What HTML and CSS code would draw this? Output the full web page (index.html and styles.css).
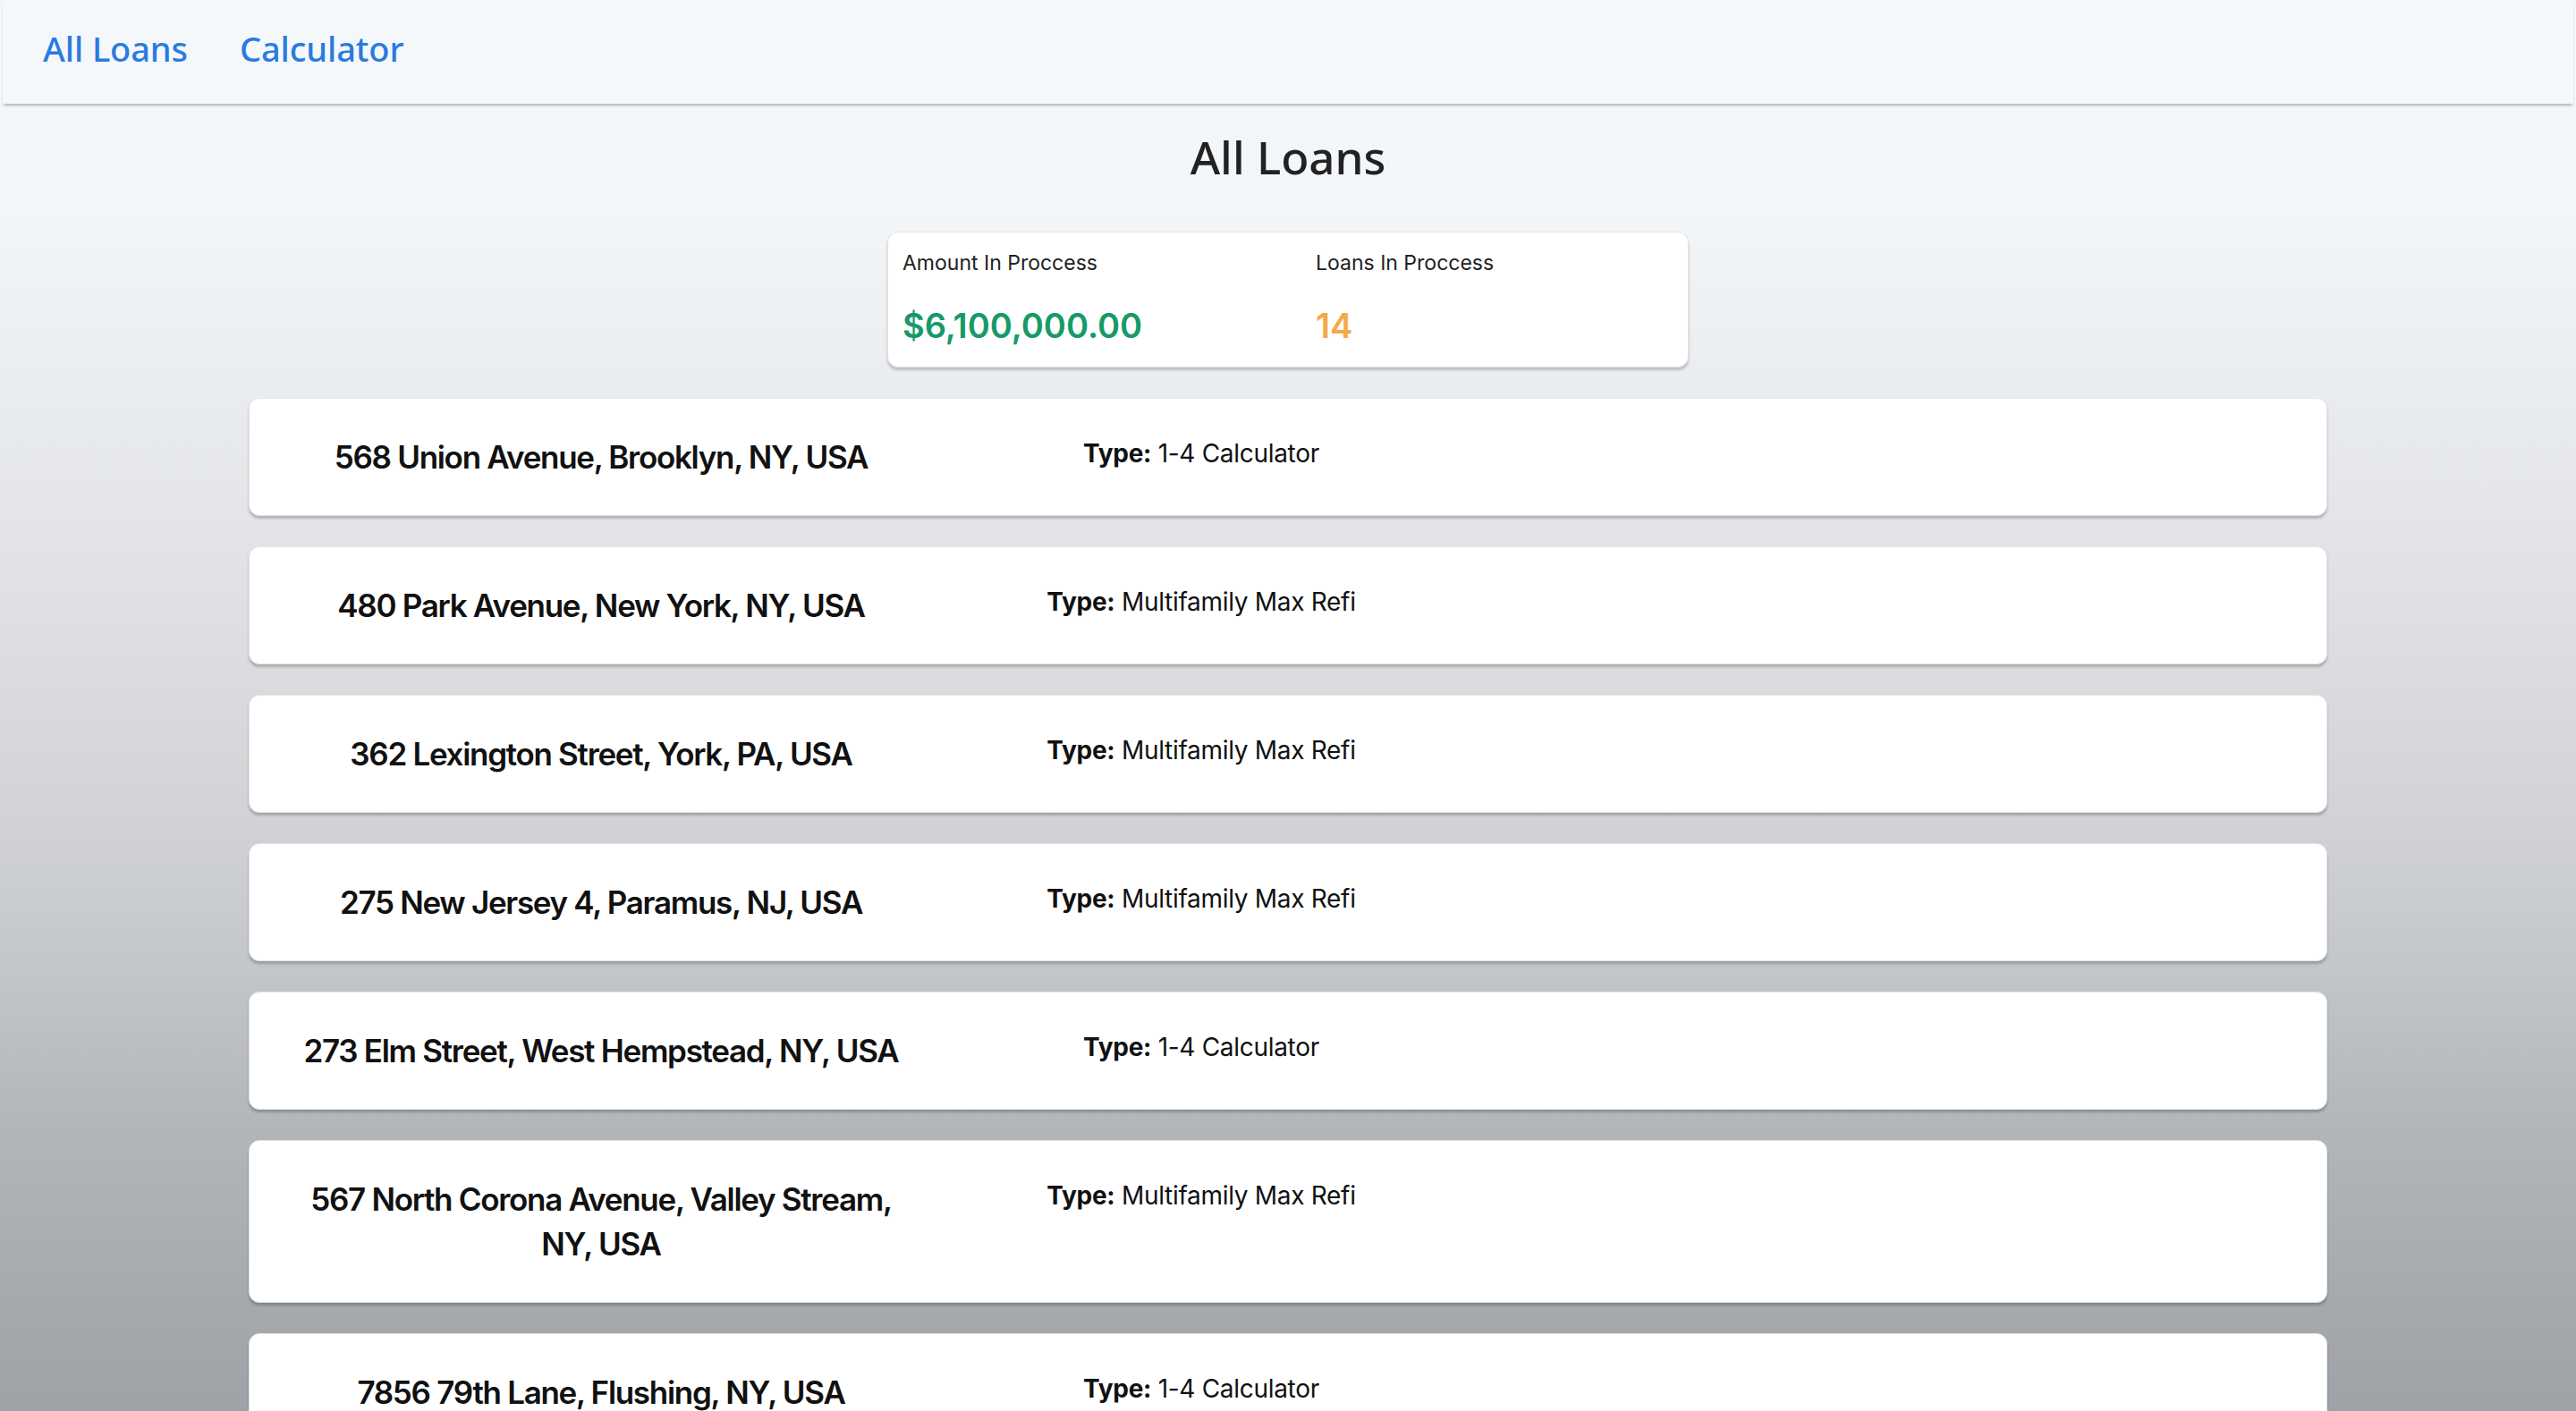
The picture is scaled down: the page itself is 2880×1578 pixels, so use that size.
FILE: index.html
```html
<!DOCTYPE html>
<html lang="en">
<head>
<meta charset="utf-8">
<title>All Loans</title>
<link rel="stylesheet" href="styles.css">
</head>
<body>
  <nav class="navbar">
    <a class="nav-link" href="#">All Loans</a>
    <a class="nav-link" href="#">Calculator</a>
  </nav>
  <main class="page">
    <h1 class="page-title">All Loans</h1>
    <section class="stats">
      <div class="stat">
        <div class="stat-label">Amount In Proccess</div>
        <div class="stat-value stat-value--green">$6,100,000.00</div>
      </div>
      <div class="stat">
        <div class="stat-label">Loans In Proccess</div>
        <div class="stat-value stat-value--orange">14</div>
      </div>
    </section>
    <section class="loan-list">
      <article class="loan">
        <div class="loan-address">568 Union Avenue, Brooklyn, NY, USA</div>
        <div class="loan-type"><b>Type:</b> 1-4 Calculator</div>
      </article>
      <article class="loan">
        <div class="loan-address">480 Park Avenue, New York, NY, USA</div>
        <div class="loan-type"><b>Type:</b> Multifamily Max Refi</div>
      </article>
      <article class="loan">
        <div class="loan-address">362 Lexington Street, York, PA, USA</div>
        <div class="loan-type"><b>Type:</b> Multifamily Max Refi</div>
      </article>
      <article class="loan">
        <div class="loan-address">275 New Jersey 4, Paramus, NJ, USA</div>
        <div class="loan-type"><b>Type:</b> Multifamily Max Refi</div>
      </article>
      <article class="loan">
        <div class="loan-address">273 Elm Street, West Hempstead, NY, USA</div>
        <div class="loan-type"><b>Type:</b> 1-4 Calculator</div>
      </article>
      <article class="loan">
        <div class="loan-address">567 North Corona Avenue, Valley Stream, NY, USA</div>
        <div class="loan-type"><b>Type:</b> Multifamily Max Refi</div>
      </article>
      <article class="loan">
        <div class="loan-address">7856 79th Lane, Flushing, NY, USA</div>
        <div class="loan-type"><b>Type:</b> 1-4 Calculator</div>
      </article>
    </section>
  </main>
</body>
</html>
```

FILE: styles.css
```css
html {
  scrollbar-width: none;
  background: linear-gradient(to bottom,
    #f5f8fb 0%, #f3f6f9 15%, #e3e5e8 37%, #d0d2d5 59%,
    #c3c6c9 69%, #b3b6b9 80%, #a6a9ac 93%, #9fa2a6 100%) fixed;
  min-height: 100%;
}
html::-webkit-scrollbar { display: none; }

body {
  margin: 0;
  font-family: Inter, "Liberation Sans", sans-serif;
  color: #111;
}

.navbar {
  height: 116px;
  display: flex;
  align-items: center;
  gap: 58px;
  padding: 0 45px;
  background: #f5f8fb;
  box-shadow: 0 3px 3px -1px rgba(0, 0, 0, 0.28);
  margin: 0 3px;
}

.nav-link {
  font-family: "Noto Sans", sans-serif;
  font-weight: 500;
  font-size: 38px;
  letter-spacing: -0.1px;
  color: #2a7be0;
  text-decoration: none;
  margin-top: -8px;
}

.page {
  display: flex;
  flex-direction: column;
  align-items: center;
}

.page-title {
  margin: 24px 0 49px;
  font-family: "Noto Sans", sans-serif;
  font-weight: 500;
  font-size: 51px;
  line-height: 70px;
  color: #222;
}

.stats {
  box-sizing: border-box;
  width: 896px;
  height: 152px;
  padding: 18px 16px;
  display: grid;
  grid-template-columns: 462px 1fr;
  background: #fff;
  border: 1px solid #e2e3e5;
  border-radius: 12px;
  box-shadow: 0 3px 3px rgba(0, 0, 0, 0.2);
}

.stat-label {
  font-size: 23px;
  line-height: 33px;
  color: #222;
}

.stat-value {
  margin-top: 26px;
  font-size: 38px;
  line-height: 54px;
  font-weight: 600;
}

.stat-value--green { color: #179a68; }
.stat-value--orange { color: #f4a947; }

.loan-list {
  width: 2324px;
  margin-top: 34px;
  display: flex;
  flex-direction: column;
  gap: 34px;
}

.loan {
  box-sizing: border-box;
  display: grid;
  grid-template-columns: 690px 652px;
  align-items: start;
  padding: 40px 48px;
  background: #fff;
  border: 1px solid #e4e5e7;
  border-radius: 12px;
  box-shadow: 0 3px 3px rgba(0, 0, 0, 0.22);
}

.loan-address {
  text-align: center;
  font-size: 35px;
  line-height: 50px;
  font-weight: 600;
  letter-spacing: -1.3px;
  color: #111;
}

.loan-type {
  text-align: center;
  font-size: 28px;
  line-height: 42px;
  letter-spacing: -0.3px;
  color: #111;
}

.loan-type b { font-weight: 700; }
```
